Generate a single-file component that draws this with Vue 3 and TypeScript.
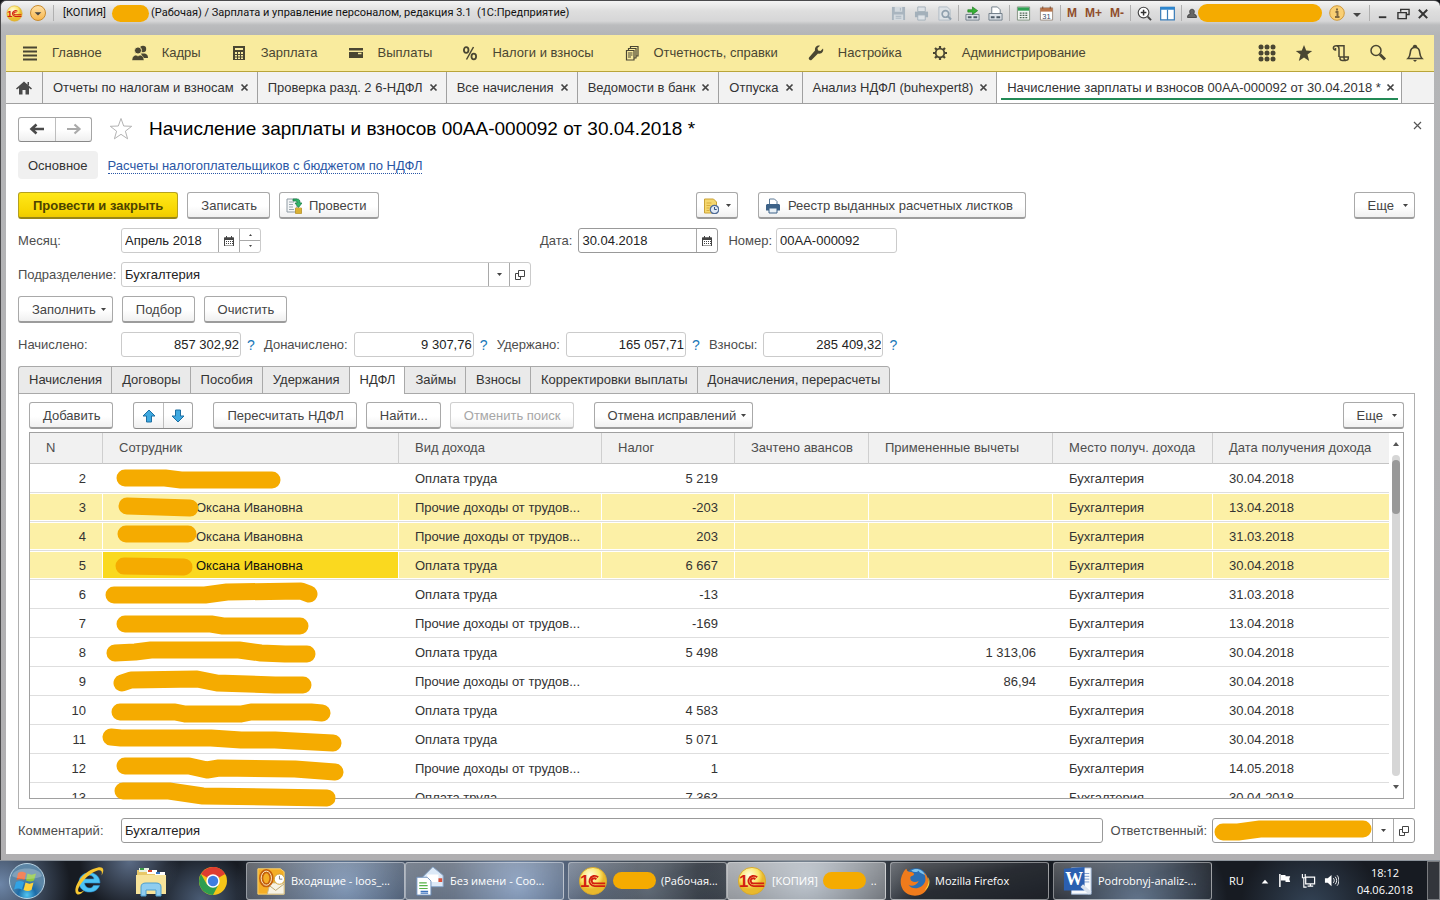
<script setup lang="ts">
import { ref } from 'vue'

interface Row {
  n: number
  name: string
  kind: string
  tax: string
  deduction: string
  date: string
  selected?: boolean
  current?: boolean
}

const icons: Record<string, string> = {
  menu: '<path d="M1 2.500h14M1 6.500h14M1 10.500h14M1 14.500h14" stroke="#4a4632" stroke-width="2"/>',
  people: '<g fill="#4a4632"><circle cx="11" cy="4" r="3.200"/><path d="M9 8.500h4c2 .8 3 2 3 4.500H11z"/><circle cx="6" cy="5.500" r="3.600" stroke="#f9eb9e"/><path d="M0 15.500c0-4 2-5 4-5.500l2 1 2-1c2 .5 4 1.500 4 5.500z" stroke="#f9eb9e" stroke-width=".6"/></g>',
  calc: '<rect x="2" y="1" width="12" height="14" fill="#4a4632"/><path d="M4 3h8v2H4z" fill="#f9eb9e"/><path d="M4 7h2v2H4zM7 7h2v2H7zM10 7h2v2h-2zM4 10h2v1.500H4zM7 10h2v1.500H7zM10 10h2v1.500h-2zM4 12.500h2V14H4zM7 12.500h2V14H7zM10 12.500h2V14h-2z" fill="#f9eb9e"/>',
  card: '<path d="M1 3h14v2.500H1zM1 7h14v6H1z" fill="#4a4632"/><path d="M10 8.500h3.500" stroke="#f9eb9e" stroke-width="1.500"/>',
  percent: '<g fill="none" stroke="#4a4632" stroke-width="1.800"><ellipse cx="4.200" cy="5" rx="2.300" ry="2.800"/><ellipse cx="11.800" cy="11.500" rx="2.300" ry="2.800"/><path d="M11.500 2l-7 12.500" stroke-width="1.500"/></g>',
  docs: '<g fill="none" stroke="#4a4632" stroke-width="1.200"><path d="M2.500 5.500h7.500v9.500H2.500zM4.500 5V3.500H12V13h-1.500M6.500 3V1.500H14V11h-1.500M4 8h4.500M4 10h4.500M4 12h3"/></g>',
  wrench: '<path d="M15 3.500l-2.500 2.500-2.500-.5-.5-2.500L12 .8C9.500 0 6.500 2 7 5.500L1 12.500c-1 1.500 1 3.500 2.500 2.500l6.500-6.500c3.500 1 6-2 5-5z" fill="#4a4632"/>',
  gear: '<g fill="none" stroke="#4a4632"><circle cx="8" cy="8" r="4.300" stroke-width="1.800"/><path d="M8 1v2.500M8 12.500V15M1 8h2.500M12.500 8H15M3 3l1.800 1.800M11.200 11.200L13 13M13 3l-1.800 1.800M4.800 11.200L3 13" stroke-width="2.200"/></g>',
  grid: '<g fill="#4a4632"><circle cx="3" cy="3" r="2.500"/><circle cx="9" cy="3" r="2.500"/><circle cx="15" cy="3" r="2.500"/><circle cx="3" cy="9" r="2.500"/><circle cx="9" cy="9" r="2.500"/><circle cx="15" cy="9" r="2.500"/><circle cx="3" cy="15" r="2.500"/><circle cx="9" cy="15" r="2.500"/><circle cx="15" cy="15" r="2.500"/></g>',
  starFill: '<path d="M9 1l2.200 5.600 6 .3-4.700 3.700L14.200 17 9 13.400 3.800 17l1.700-6.400L.8 6.900l6-.3z" fill="#4a4632"/>',
  scroll: '<path d="M4.500 1.700h7.500V14c0 3 4.300 3 4.300 0v-1H8v1.500c0 1.500 1 2 2.500 2h3.500M7 13V4.500M4.500 1.700C.5 1.700.5 6 3.500 6V4M4.500 1.700C6.500 1.700 7 3 7 5" fill="none" stroke="#4a4632" stroke-width="1.500"/>',
  search: '<circle cx="7" cy="6.500" r="5" fill="none" stroke="#4a4632" stroke-width="1.500"/><path d="M11 10.500l5 5" stroke="#4a4632" stroke-width="3"/>',
  bell: '<path d="M2 14.500h14c-2-2-2-3-2.300-6C13.500 5 12 3.500 9 3.500S4.500 5 4.300 8.500C4 11.500 4 12.500 2 14.500zM7.500 3.500c0-2.500 3-2.500 3 0" fill="none" stroke="#4a4632" stroke-width="1.600"/><path d="M7 16h4l-2 2z" fill="#4a4632"/>',
  save: '<path d="M1 1h14v14H1z" fill="#a9b5bf"/><path d="M4 1h8v5H4zM3 9h10v6H3z" fill="#d4dadf"/><path d="M5 11h6M5 13h6M10 2v3" stroke="#a9b5bf"/>',
  printGrey: '<path d="M4 1h8v5H4z" fill="#dde2e6" stroke="#a3b0ba"/><path d="M1 6h14v6H1z" fill="#a3b0ba"/><path d="M4 9.500h8V15H4z" fill="#dde2e6" stroke="#a3b0ba"/>',
  preview: '<path d="M2 1h9l3 3v11H2z" fill="#dde2e6" stroke="#b0bbc4"/><circle cx="9" cy="8.500" r="3.500" fill="none" stroke="#8fa0ae" stroke-width="1.800"/><path d="M11.500 11l3.500 3.500" stroke="#8fa0ae" stroke-width="2.200"/>',
  sendLink: '<path d="M1 9h14v6H1z" fill="#dde2e8" stroke="#6f7c88"/><path d="M3 12h4M9 12h4" stroke="#4f5c68" stroke-width="2"/><path d="M3 4H8V1l5.500 4L8 9V6.500H3z" fill="#35b233" stroke="#1f7a20" stroke-width=".7"/>',
  printLink: '<path d="M4 1h6l3 3v5H4z" fill="#fff" stroke="#6f7c88"/><path d="M1 8h14v7H1z" fill="#dde2e8" stroke="#6f7c88"/><path d="M3 12h4M9 12h4" stroke="#4f5c68" stroke-width="2"/>',
  calcGreen: '<path d="M1.500 1h13v14h-13z" fill="#f2f5f2" stroke="#80917f"/><path d="M2 1.500h12V5H2z" fill="#2fa152"/><path d="M4 7.500h9M4 10h9M4 12.500h9" stroke="#4d6656" stroke-width="1.300" stroke-dasharray="2 1"/>',
  calendar31: '<path d="M1.500 2h13v13h-13z" fill="#fff" stroke="#9a8c80"/><path d="M1.500 2h13v4h-13z" fill="#b9744a"/><path d="M4 .5V3M12 .5V3" stroke="#7a4a2c"/><text x="8" y="13.500" font-size="8" font-family="Liberation Sans, sans-serif" fill="#334a66" text-anchor="middle">31</text>',
  zoomIn: '<circle cx="7" cy="7" r="5.700" fill="#fff" stroke="#444" stroke-width="1.200"/><path d="M4 7h6M7 4v6" stroke="#333" stroke-width="1.600"/><path d="M11.500 11.500L15 15" stroke="#444" stroke-width="2"/>',
  panes: '<path d="M.7 1.500h14.600v13.200H.7z" fill="#fff" stroke="#3a7db8" stroke-width="1.300"/><path d="M.7 1h14.600v3H.7z" fill="#2d86cf"/><path d="M8 4v11" stroke="#3a7db8" stroke-width="1.300"/>',
  user: '<path d="M2 14c0-3 1-4 4-5-1.500-1-2-6 2-6s3.500 5 2 6c3 1 4 2 4 5z" fill="#666" stroke="#333"/>',
  info: '<circle cx="8" cy="8" r="7.300" fill="#f9cf74" stroke="#d09a3b"/><path d="M8 3.500v2M6.500 7H8.500v5M6 12h4.500" stroke="#806840" stroke-width="2" fill="none"/>',
  drop: '<path d="M1 5h8L5 9z" fill="#444"/>',
  min: '<path d="M2 11h8" stroke="#333" stroke-width="2"/>',
  restore: '<path d="M4 5V2.500h9V8h-2.500M1 6h9v6.500H1z" fill="none" stroke="#333" stroke-width="1.500"/>',
  closeBig: '<path d="M2 3l9 9M11 3l-9 9" stroke="#333" stroke-width="2.200"/>',
  cross: '<path d="M1.500 1.500l6 6M7.500 1.500l-6 6" stroke="#444" stroke-width="1.700"/>',
  crossThin: '<path d="M1 1l7 7M8 1L1 8" stroke="#555" stroke-width="1.200"/>',
  home: '<path d="M0 8l8-7 8 7-1 1-2-1.500V14H9.500V9.500h-3V14H3V7.500L1 9zM11.500 1.500H13V5l-1.500-1z" fill="#4a4a4a"/>',
  left: '<path d="M15 7H4M7.500 2.500L2.500 7l5 4.500" fill="none" stroke="#4a4a4a" stroke-width="2.600"/>',
  right: '<path d="M1 7h11M8.500 2.500l5 4.500-5 4.500" fill="none" stroke="#aaa" stroke-width="2.200"/>',
  starLine: '<path d="M12 1.500l2.700 7.500 8 .3-6.300 4.900 2.200 7.600L12 17.300 5.400 21.800l2.200-7.600L1.300 9.300l8-.3z" fill="#fff" stroke="#b3b3b3"/>',
  post: '<path d="M1 1h10v13H1z" fill="#f4f6f7" stroke="#8e9aa3"/><path d="M3 4h5M3 6.500h4M3 9h4M3 11.500h5" stroke="#9aa6ae"/><path d="M7 1h4c2.500 0 3 1.500 3 4h2l-3.500 4.500L9 5h2.200c0-1.500-.5-2-2-2H7z" fill="#31b56a" stroke="#14793f" stroke-width=".7"/><path d="M9.500 10h6v5.500h-6z" fill="#f0c63f" stroke="#b08a1c" stroke-width=".7"/><path d="M9.500 12h6M9.500 14h6" stroke="#b08a1c" stroke-width=".7"/>',
  docClock: '<path d="M1.500 1h9l3 3v11h-12z" fill="#f5d76f" stroke="#caa338"/><path d="M3.500 5h5M3.500 7.500h4M3.500 10h3M3.500 12.500h3" stroke="#d9ae3c"/><circle cx="11.500" cy="11.500" r="4.200" fill="#dfe9f6" stroke="#4f6b96" stroke-width="1.200"/><path d="M11.500 9v2.500h2.200" stroke="#35517d" fill="none"/>',
  printer: '<path d="M4.500 1h5L12 3.500V7H4.500z" fill="#fff" stroke="#5d7a96"/><path d="M2 6h12l1 1v5.500H1V7z" fill="#3d6288"/><path d="M4 10h8v5H4z" fill="#e9f0f6" stroke="#3d6288"/>',
  caret: '<path d="M0 1h5L2.500 4z" fill="#444"/>',
  caretUp: '<path d="M1 4h3L2.500 2z" fill="#444"/>',
  caretDown: '<path d="M1 1h3L2.500 3z" fill="#444"/>',
  cal: '<path d="M.5 2h9v8h-9z" fill="#fff" stroke="#444"/><path d="M0 1.500h10V4H0z" fill="#444"/><path d="M2.500 0v2M7.500 0v2" stroke="#444"/><path d="M2 5.500h7M2 7.500h7" stroke="#444" stroke-dasharray="1 1"/>',
  open: '<path d="M3.500.5h6v6h-6zM3 3.500H.5v6h5V7" fill="none" stroke="#444"/>',
  up: '<path d="M7 1l6 6H9.500v6h-5V7H1z" fill="#3fa9e0" stroke="#1c6fa3"/>',
  down: '<path d="M7 13L1 7h3.500V1h5v6H13z" fill="#3fa9e0" stroke="#1c6fa3"/>',
  scrollUp: '<path d="M0 5h6L3 1z" fill="#555"/>',
  scrollDown: '<path d="M0 1h6L3 5z" fill="#555"/>',
  onec: '<defs><radialGradient id="onecFill" cx=".4" cy=".3"><stop offset="0" stop-color="#fffde0"/><stop offset=".7" stop-color="#fbe56a"/><stop offset="1" stop-color="#e9b92d"/></radialGradient></defs><circle cx="16" cy="16" r="14.500" fill="url(#onecFill)" stroke="#d8a92c"/><text x="2" y="22" font-size="18" font-weight="700" font-family="Liberation Sans, sans-serif" fill="#d3200f">1</text><path d="M21.500 12a5.500 5.500 0 1 0-3.500 9.500H29M19.500 14.200a2.700 2.700 0 1 0-1.500 4.300H29" fill="none" stroke="#d3200f" stroke-width="2"/>',
  start: '<defs><radialGradient id="orb" cx=".5" cy=".9"><stop offset="0" stop-color="#53c7f2"/><stop offset=".5" stop-color="#1d6ca8"/><stop offset="1" stop-color="#5c86a6"/></radialGradient></defs><circle cx="19" cy="19" r="17.500" fill="url(#orb)" stroke="#b9d3e3"/><path d="M10 11c3-2 5-1.500 8 0l-1.500 7c-3-1.500-5-1.500-8 0z" fill="#f0622d"/><path d="M19.500 11.500c3 1.500 5 1.500 8.500 0l-2 7c-3 1.500-5 1-8 0z" fill="#8dc63f"/><path d="M8 20c3-1.500 5-1.500 8 0l-2 7.500c-3-1.500-5-1.500-8 0z" fill="#31a3e4"/><path d="M17.500 20.500c3 1.500 5 1.500 8 0l-2 7.500c-3 1.500-5 1-8 0z" fill="#ffd23c"/><path d="M4 14C6 4 32 4 34 14 28 18 10 18 4 14z" fill="#fff" opacity=".22"/>',
  ie: '<path d="M27 18H11.500c.5 6 7.500 6.500 9 2.500H26.500C23.500 30 6 29.500 6 17 6 5 27 4 27 18zM11.500 14h9.500c-.5-5-8.500-5-9.500 0z" fill="#4cc3f5" stroke="#2b8fd0" stroke-width=".6"/><path d="M4.500 29.500C-2 27 7 6 25 2.500c6-1 6.500 3 3.500 8 1-4 0-6-4-5C13 9 1 26 6.500 27c1.500.2 3-.5 5-1.500-2.500 2.500-5 4.500-7 4z" fill="#f7c631"/>',
  folder: '<path d="M2 5h12l2 3h14v21H2z" fill="#e8c868"/><path d="M4 3h10v4H4z" fill="#e9f3e0"/><path d="M5 3h4v2H5z" fill="#3b9c46"/><path d="M12 5h10v4H12z" fill="#fff"/><path d="M13 5h4v2h-4z" fill="#d5472f"/><path d="M20 7h10v4H20z" fill="#fff"/><path d="M21 7h4v2h-4z" fill="#3a78c4"/><path d="M1 10h30v19H1z" fill="#f7e39a"/><path d="M6 31v-9c0-3 2-4 5-4h10c3 0 5 1 5 4v9h-5v-6H11v6z" fill="#8fcdf0" stroke="#4d9fd0"/>',
  chrome: '<circle cx="16" cy="16" r="14" fill="#f5c518"/><path d="M16 16L3.900 9A14 14 0 0 1 28.100 9z" fill="#df3d30"/><path d="M16 2a14 14 0 0 1 12.100 7H16z" fill="#df3d30"/><path d="M3.900 9A14 14 0 0 0 16 30l5.500-10.500L10 19.500z" fill="#2f9e4f"/><circle cx="16" cy="16" r="6.700" fill="#fff"/><circle cx="16" cy="16" r="5.200" fill="#3f7de0"/>',
  outlook: '<path d="M2 3h24l4 3v24H2z" fill="#f4ae26" stroke="#ffd873"/><path d="M15 18h15v12H12z" fill="#f7f3e4" stroke="#c9b98a"/><path d="M13 20l8 6 9-7" fill="none" stroke="#b9a46b"/><ellipse cx="11" cy="13" rx="5.500" ry="7.500" fill="none" stroke="#c4600c" stroke-width="4.500"/><ellipse cx="11" cy="13" rx="5.500" ry="7.500" fill="none" stroke="#fff3d2" stroke-width="1"/><circle cx="25" cy="14" r="5.500" fill="#fff" stroke="#d0a030"/><path d="M25 10.500V14h3" fill="none" stroke="#777"/>',
  mail: '<path d="M8 12L19 1l11 9v12H8z" fill="#dce9f7" stroke="#8aa8cb"/><path d="M13 9h12v8H13z" fill="#fff"/><path d="M25 13h4v4h-4z" fill="#d9503a"/><path d="M2 12h11l4 4v15H2z" fill="#fff" stroke="#6d8fbd"/><path d="M4.500 18h8M4.500 21h9M4.500 24h9" stroke="#57b347" stroke-width="1.300"/><path d="M6 27h8M6 29h8" stroke="#3c71bd" stroke-width="1.300"/>',
  firefox: '<circle cx="17" cy="15" r="12.500" fill="#2a6fb5"/><path d="M12 5c5-4 13-1 15 5-4-3-6-2-7-5-2 2-5 2-8 0z" fill="#7fc4ee"/><path d="M3 8c1-2 2-4 4-5 0 2 1 3 3 3 3 0 5 1 5 3-1 2-4 1-4 4 0 4 5 5 9 3-2 5-8 6-11 4 4 6 15 5 18-4 .5-4-.5-7-2-9 5 3 7 11 4 17-5 10-20 10-26 1-3-5-3-11 0-17z" fill="#f07b1c"/><path d="M30 12c1 5 0 10-4 14 5-2 7-10 4-14z" fill="#fbd33c"/>',
  word: '<path d="M9 2h21v28H9z" fill="#f8fafd" stroke="#9fb4d4"/><path d="M22 8h6M22 11h6M22 14h6M22 17h6" stroke="#7c9bcc"/><path d="M1 3l22-2v25H1z" fill="#2b5fb0"/><text x="12" y="20" font-size="19" font-weight="700" font-family="Liberation Serif, serif" fill="#fff" text-anchor="middle">W</text><path d="M20 21l9 8" stroke="#d9e2ee" stroke-width="4"/>',
  flag: '<path d="M2 1v14" stroke="#fff" stroke-width="1.600"/><path d="M3 2h5v1.500h5l-1 3 1 3H8V8H3z" fill="#fff"/>',
  network: '<path d="M5 4.500h9.500v7H5zM7 14h6M10 12v2" fill="none" stroke="#fff" stroke-width="1.300"/><path d="M1.500 1v4h3V1M3 5v10h3" fill="none" stroke="#fff" stroke-width="1.200"/>',
  sound: '<path d="M1 5.500h3L8 2v12l-4-3.500H1z" fill="#fff"/><path d="M10 5.500c1.200 1.500 1.200 3.500 0 5M12 4c2 2.500 2 5.500 0 8M14 2.500c2.500 3 2.500 8 0 11" fill="none" stroke="#fff"/>',
  trayUp: '<path d="M1 9h8L5 4.500z" fill="#fff"/>',
}

const nav = [
  { icon: 'menu', text: 'Главное' },
  { icon: 'people', text: 'Кадры' },
  { icon: 'calc', text: 'Зарплата' },
  { icon: 'card', text: 'Выплаты' },
  { icon: 'percent', text: 'Налоги и взносы' },
  { icon: 'docs', text: 'Отчетность, справки' },
  { icon: 'wrench', text: 'Настройка' },
  { icon: 'gear', text: 'Администрирование' },
]
const navTools = [
  { icon: 'grid', label: 'Меню функций' },
  { icon: 'starFill', label: 'Избранное' },
  { icon: 'scroll', label: 'История' },
  { icon: 'search', label: 'Поиск' },
  { icon: 'bell', label: 'Оповещения' },
]
const openTabs = [
  'Отчеты по налогам и взносам',
  'Проверка разд. 2 6-НДФЛ',
  'Все начисления',
  'Ведомости в банк',
  'Отпуска',
  'Анализ НДФЛ (buhexpert8)',
  'Начисление зарплаты и взносов 00АА-000092 от 30.04.2018 *',
]
const activeWindow = ref(6)

const sections = ['Начисления', 'Договоры', 'Пособия', 'Удержания', 'НДФЛ', 'Займы', 'Взносы', 'Корректировки выплаты', 'Доначисления, перерасчеты']
const activeSection = ref('НДФЛ')

const totals = ref([
  { id: 'accrued', label: 'Начислено:', value: '857 302,92' },
  { id: 'extra', label: 'Доначислено:', value: '9 307,76' },
  { id: 'held', label: 'Удержано:', value: '165 057,71' },
  { id: 'fees', label: 'Взносы:', value: '285 409,32' },
])

const month = ref('Апрель 2018')
const docDate = ref('30.04.2018')
const docNumber = ref('00АА-000092')
const department = ref('Бухгалтерия')
const comment = ref('Бухгалтерия')

const pay = 'Оплата труда'
const other = 'Прочие доходы от трудов...'
const rows: Row[] = [
  { n: 2, name: '', kind: pay, tax: '5 219', deduction: '', date: '30.04.2018' },
  { n: 3, name: 'Оксана Ивановна', kind: other, tax: '-203', deduction: '', date: '13.04.2018', selected: true },
  { n: 4, name: 'Оксана Ивановна', kind: other, tax: '203', deduction: '', date: '31.03.2018', selected: true },
  { n: 5, name: 'Оксана Ивановна', kind: pay, tax: '6 667', deduction: '', date: '30.04.2018', selected: true, current: true },
  { n: 6, name: '', kind: pay, tax: '-13', deduction: '', date: '31.03.2018' },
  { n: 7, name: '', kind: other, tax: '-169', deduction: '', date: '13.04.2018' },
  { n: 8, name: '', kind: pay, tax: '5 498', deduction: '1 313,06', date: '30.04.2018' },
  { n: 9, name: '', kind: other, tax: '', deduction: '86,94', date: '30.04.2018' },
  { n: 10, name: '', kind: pay, tax: '4 583', deduction: '', date: '30.04.2018' },
  { n: 11, name: '', kind: pay, tax: '5 071', deduction: '', date: '30.04.2018' },
  { n: 12, name: '', kind: other, tax: '1', deduction: '', date: '14.05.2018' },
  { n: 13, name: '', kind: pay, tax: '7 363', deduction: '', date: '30.04.2018' },
]

// Marker strokes that hide the surnames, in the coordinates of the table frame.
const marks = [
  '96,46 136,46 152,48 243,48',
  '98,74 161,76',
  '97,102 159,102',
  '95,134 155,135',
  '85,163 176,163 198,160 272,159 280,162',
  '96,192 182,192 194,194 271,194',
  '86,221 106,220 122,218 210,218 232,221 256,222 278,222',
  '93,251 102,248 168,247 188,251 246,253 274,253',
  '91,280 146,280 156,282 212,282 222,280 282,280 293,281',
  '82,305 92,306 182,306 212,308 246,308 304,311',
  '96,334 160,334 178,338 190,336 266,337 306,340',
  '94,359 140,359 174,364 240,365 298,366',
]

const tasks = [
  { icon: 'outlook', text: 'Входящие - loos_...', cls: 'lit joined' },
  { icon: 'mail', text: 'Без имени - Соо...', cls: 'lit' },
  { icon: 'onec', text: '(Рабочая...', cls: 'joined', before: true },
  { icon: 'onec', text: '[КОПИЯ]', cls: 'active', after: true },
  { icon: 'firefox', text: 'Mozilla Firefox', cls: '' },
  { icon: 'word', text: 'Podrobnyj-analiz-...', cls: '' },
]
</script>

<template>
  <div class="desktop">
    <div class="window">
      <header class="titlebar">
        <svg class="i17" viewBox="0 0 32 32" v-html="icons.onec" />
        <button class="sys-drop" aria-label="Главное меню"><svg class="i10" viewBox="0 0 10 12" v-html="icons.drop" /></button>
        <span class="tsep" />
        <div class="caption">[КОПИЯ]<i class="blot blot-s" />(Рабочая) / Зарплата и управление персоналом, редакция 3.1&nbsp; (1С:Предприятие)</div>
        <div class="ttools">
          <button aria-label="Сохранить"><svg class="i15" viewBox="0 0 16 16" v-html="icons.save" /></button>
          <button aria-label="Печать"><svg class="i15" viewBox="0 0 16 16" v-html="icons.printGrey" /></button>
          <button aria-label="Просмотр"><svg class="i15" viewBox="0 0 16 16" v-html="icons.preview" /></button>
          <span class="tsep" />
          <button aria-label="Получить ссылку"><svg class="i15" viewBox="0 0 16 16" v-html="icons.sendLink" /></button>
          <button aria-label="Перейти по ссылке"><svg class="i15" viewBox="0 0 16 16" v-html="icons.printLink" /></button>
          <span class="tsep" />
          <button aria-label="Калькулятор"><svg class="i15" viewBox="0 0 16 16" v-html="icons.calcGreen" /></button>
          <button aria-label="Календарь"><svg class="i15" viewBox="0 0 16 16" v-html="icons.calendar31" /></button>
          <span class="tsep" />
          <button class="mem">M</button>
          <button class="mem">M+</button>
          <button class="mem">M-</button>
          <span class="tsep" />
          <button aria-label="Масштаб"><svg class="i15" viewBox="0 0 16 16" v-html="icons.zoomIn" /></button>
          <button aria-label="Панели"><svg class="i15" viewBox="0 0 16 16" v-html="icons.panes" /></button>
          <span class="tsep" />
        </div>
        <div class="tuser">
          <svg class="i12" viewBox="0 0 16 16" v-html="icons.user" />
          <i class="blot blot-l" />
        </div>
        <div class="tend">
          <button aria-label="Справка"><svg class="i16" viewBox="0 0 16 16" v-html="icons.info" /></button>
          <button aria-label="Еще"><svg class="i10" viewBox="0 0 10 10" v-html="icons.drop" /></button>
          <span class="tsep" />
          <button aria-label="Свернуть"><svg class="i13" viewBox="0 0 14 14" v-html="icons.min" /></button>
          <button aria-label="Восстановить"><svg class="i13" viewBox="0 0 14 14" v-html="icons.restore" /></button>
          <button aria-label="Закрыть окно"><svg class="i13" viewBox="0 0 14 14" v-html="icons.closeBig" /></button>
        </div>
      </header>

      <div class="client">
        <nav class="nav">
          <a v-for="item in nav" :key="item.text" class="nav-item" href="#">
            <svg class="i16" viewBox="0 0 16 16" v-html="icons[item.icon]" />
            <span>{{ item.text }}</span>
          </a>
          <div class="nav-tools">
            <button v-for="t in navTools" :key="t.icon" :aria-label="t.label"><svg class="i18" viewBox="0 0 18 18" v-html="icons[t.icon]" /></button>
          </div>
        </nav>

        <div class="wtabs">
          <button class="home" aria-label="Начальная страница"><svg class="i16" viewBox="0 0 16 15" v-html="icons.home" /></button>
          <div v-for="(t, i) in openTabs" :key="t" class="wtab" :class="{ on: i === activeWindow }">
            <button class="wtab-name" @click="activeWindow = i">{{ t }}</button>
            <button class="wtab-x" aria-label="Закрыть"><svg class="i9" viewBox="0 0 9 9" v-html="icons.cross" /></button>
          </div>
        </div>

        <main class="form">
          <div class="head">
            <div class="pair">
              <button aria-label="Назад"><svg class="i16" viewBox="0 0 16 14" v-html="icons.left" /></button>
              <button aria-label="Вперед"><svg class="i16" viewBox="0 0 16 14" v-html="icons.right" /></button>
            </div>
            <button class="plain" aria-label="В избранное"><svg class="i24" viewBox="0 0 24 24" v-html="icons.starLine" /></button>
            <h1>Начисление зарплаты и взносов 00АА-000092 от 30.04.2018 *</h1>
            <button class="plain close" aria-label="Закрыть"><svg class="i9" viewBox="0 0 9 9" v-html="icons.crossThin" /></button>
          </div>

          <div class="views">
            <a class="view on" href="#">Основное</a>
            <a class="link" href="#">Расчеты налогоплательщиков с бюджетом по НДФЛ</a>
          </div>

          <div class="bar cmd">
            <div class="bar cmd-left">
              <button class="btn primary">Провести и закрыть</button>
              <button class="btn">Записать</button>
              <button class="btn iconic"><svg class="i16" viewBox="0 0 16 16" v-html="icons.post" />Провести</button>
            </div>
            <button class="btn iconic wide-gap" aria-label="Создать на основании"><svg class="i16" viewBox="0 0 16 16" v-html="icons.docClock" /><svg class="i5" viewBox="0 0 5 5" v-html="icons.caret" /></button>
            <button class="btn iconic"><svg class="i16" viewBox="0 0 16 16" v-html="icons.printer" />Реестр выданных расчетных листков</button>
            <button class="btn more">Еще<svg class="i5" viewBox="0 0 5 5" v-html="icons.caret" /></button>
          </div>

          <div class="bar">
            <div class="bar month-part">
              <label class="cap" for="month">Месяц:</label>
              <div class="field f-month">
                <input id="month" v-model="month">
                <button aria-label="Выбрать месяц"><svg class="i10" viewBox="0 0 10 10" v-html="icons.cal" /></button>
                <div class="spin">
                  <button aria-label="Больше"><svg class="i5" viewBox="0 0 5 5" v-html="icons.caretUp" /></button>
                  <button aria-label="Меньше"><svg class="i5" viewBox="0 0 5 5" v-html="icons.caretDown" /></button>
                </div>
              </div>
            </div>
            <label for="date">Дата:</label>
            <div class="field dark f-date">
              <input id="date" v-model="docDate">
              <button aria-label="Выбрать дату"><svg class="i10" viewBox="0 0 10 10" v-html="icons.cal" /></button>
            </div>
            <label for="number">Номер:</label>
            <div class="field f-num"><input id="number" v-model="docNumber"></div>
          </div>

          <div class="bar">
            <label class="cap" for="dept">Подразделение:</label>
            <div class="field f-dept">
              <input id="dept" v-model="department">
              <button aria-label="Выбрать"><svg class="i5" viewBox="0 0 5 5" v-html="icons.caret" /></button>
              <button aria-label="Открыть"><svg class="i10" viewBox="0 0 10 10" v-html="icons.open" /></button>
            </div>
          </div>

          <div class="bar fill">
            <button class="btn drop">Заполнить<svg class="i5" viewBox="0 0 5 5" v-html="icons.caret" /></button>
            <button class="btn">Подбор</button>
            <button class="btn">Очистить</button>
          </div>

          <div class="totals">
            <div v-for="t in totals" :key="t.id" class="total">
              <label :for="t.id">{{ t.label }}</label>
              <div class="field f-sum"><input :id="t.id" v-model="t.value"></div>
              <button class="help" aria-label="Подсказка">?</button>
            </div>
          </div>

          <div class="stabs" role="tablist">
            <button v-for="s in sections" :key="s" role="tab" :class="{ on: s === activeSection }" @click="activeSection = s">{{ s }}</button>
          </div>

          <section class="panel">
            <div class="bar tools">
              <button class="btn">Добавить</button>
              <div class="pair arrows">
                <button aria-label="Вверх"><svg class="i14" viewBox="0 0 14 14" v-html="icons.up" /></button>
                <button aria-label="Вниз"><svg class="i14" viewBox="0 0 14 14" v-html="icons.down" /></button>
              </div>
              <button class="btn">Пересчитать НДФЛ</button>
              <button class="btn">Найти...</button>
              <button class="btn" disabled>Отменить поиск</button>
              <button class="btn drop fixes">Отмена исправлений<svg class="i5" viewBox="0 0 5 5" v-html="icons.caret" /></button>
              <button class="btn more">Еще<svg class="i5" viewBox="0 0 5 5" v-html="icons.caret" /></button>
            </div>

            <div class="frame">
              <div class="view-port">
                <table>
                  <colgroup>
                    <col class="c-n"><col><col class="c-kind"><col class="c-tax"><col class="c-adv"><col class="c-ded"><col class="c-place"><col class="c-date">
                  </colgroup>
                  <thead>
                    <tr>
                      <th>N</th><th>Сотрудник</th><th>Вид дохода</th><th>Налог</th><th>Зачтено авансов</th><th>Примененные вычеты</th><th>Место получ. дохода</th><th>Дата получения дохода</th>
                    </tr>
                  </thead>
                  <tbody>
                    <tr v-for="r in rows" :key="r.n" :class="{ sel: r.selected, cur: r.current }">
                      <td class="r">{{ r.n }}</td>
                      <td class="emp">{{ r.name }}</td>
                      <td>{{ r.kind }}</td>
                      <td class="r">{{ r.tax }}</td>
                      <td />
                      <td class="r">{{ r.deduction }}</td>
                      <td>Бухгалтерия</td>
                      <td>{{ r.date }}</td>
                    </tr>
                  </tbody>
                </table>
              </div>
              <div class="scroll">
                <svg class="i6" viewBox="0 0 6 6" v-html="icons.scrollUp" />
                <div class="track"><div class="thumb" /></div>
                <svg class="i6" viewBox="0 0 6 6" v-html="icons.scrollDown" />
              </div>
              <svg class="marks" width="360" height="390" viewBox="0 0 360 390">
                <polyline v-for="m in marks" :key="m" :points="m" />
              </svg>
            </div>
          </section>

          <div class="bar foot">
            <label class="cap" for="comment">Комментарий:</label>
            <div class="field dark f-comment"><input id="comment" v-model="comment"></div>
            <label class="resp-label" for="resp">Ответственный:</label>
            <div class="field dark f-resp">
              <input id="resp">
              <button aria-label="Выбрать"><svg class="i5" viewBox="0 0 5 5" v-html="icons.caret" /></button>
              <button aria-label="Открыть"><svg class="i10" viewBox="0 0 10 10" v-html="icons.open" /></button>
              <svg class="marks" width="162" height="25" viewBox="0 0 162 25"><polyline points="11,14 26,14 48,11 151,11" /></svg>
            </div>
          </div>
        </main>
      </div>
    </div>

    <footer class="taskbar">
      <div class="quick">
        <button aria-label="Пуск"><svg class="i38" viewBox="0 0 38 38" v-html="icons.start" /></button>
        <button aria-label="Internet Explorer"><svg class="i32" viewBox="0 0 32 32" v-html="icons.ie" /></button>
        <button aria-label="Проводник"><svg class="i32" viewBox="0 0 32 32" v-html="icons.folder" /></button>
        <button aria-label="Chrome"><svg class="i32" viewBox="0 0 32 32" v-html="icons.chrome" /></button>
      </div>
      <div class="tasks">
        <button v-for="t in tasks" :key="t.text" class="task" :class="t.cls">
          <svg class="i30" viewBox="0 0 32 32" v-html="icons[t.icon]" />
          <i v-if="t.before" class="blot blot-t" />
          <span>{{ t.text }}</span>
          <template v-if="t.after"><i class="blot blot-t" /><span>..</span></template>
        </button>
      </div>
      <div class="tray">
        <span class="lang">RU</span>
        <svg class="i10" viewBox="0 0 10 12" v-html="icons.trayUp" />
        <svg class="i15" viewBox="0 0 16 16" v-html="icons.flag" />
        <svg class="i15" viewBox="0 0 16 16" v-html="icons.network" />
        <svg class="i15" viewBox="0 0 16 16" v-html="icons.sound" />
        <div class="clock"><span>18:12</span><span>04.06.2018</span></div>
        <button class="peek" aria-label="Показать рабочий стол" />
      </div>
    </footer>
  </div>
</template>

<style>
html, body { margin: 0; background: #15171a; }
</style>

<style scoped>
* { box-sizing: border-box; }
.desktop { height: 100vh; display: flex; flex-direction: column; overflow: hidden; font: 13px/16px "Liberation Sans", Arial, sans-serif; color: #333; }
button { font: inherit; color: inherit; margin: 0; padding: 0; border: 0; background: none; display: flex; align-items: center; justify-content: center; white-space: nowrap; }
a { color: inherit; text-decoration: none; }
svg { display: block; flex: none; }
.i5 { width: 5px; height: 5px; }
.i6 { width: 6px; height: 6px; }
.i9 { width: 9px; height: 9px; }
.i10 { width: 10px; height: 10px; }
.i12 { width: 12px; height: 14px; }
.i13 { width: 13px; height: 13px; }
.i14 { width: 14px; height: 14px; }
.i15 { width: 15px; height: 15px; }
.i16 { width: 16px; height: 16px; }
.i17 { width: 17px; height: 17px; }
.i18 { width: 18px; height: 18px; }
.i24 { width: 24px; height: 24px; }
.i30 { width: 30px; height: 30px; }
.i32 { width: 32px; height: 32px; }
.i38 { width: 38px; height: 38px; }

.window { flex: 1; min-height: 0; display: flex; flex-direction: column; padding: 0 6px 6px 5px; border: 1px solid #4a4a4c; border-width: 1px 0 0 1px; border-radius: 6px 6px 0 0; background: linear-gradient(#f4f4f4, #dedede 10px, #d6d6d7 20px, #bbbcbe 24px, #b4b5b7 34px, #b0afb1); }
.titlebar { height: 34px; padding: 0 4px 10px 0; display: flex; align-items: center; font: 11px/14px Roboto, "Open Sans", sans-serif; color: #111; }
.sys-drop { width: 16px; height: 16px; margin: 0 7px; border: 1px solid #c98a2c; border-radius: 50%; background: linear-gradient(#ffe0a3, #f7b64d); }
.tsep { width: 1px; height: 16px; background: #b0b0b0; }
.caption { flex: 1; min-width: 0; margin-left: 9px; display: flex; align-items: center; white-space: nowrap; overflow: hidden; }
.blot { flex: none; border-radius: 9px; background: #f5ab00; }
.blot-s { width: 37px; height: 17px; margin: 0 2px 0 6px; }
.blot-l { width: 124px; height: 18px; }
.blot-t { width: 43px; height: 17px; }
.ttools, .tend, .tuser { display: flex; align-items: center; }
.ttools { gap: 8px; margin-right: 6px; }
.ttools .tsep { margin: 0 -2px; }
.mem { font: bold 12px/14px "Liberation Sans", Arial, sans-serif; color: #8f4d2b; }
.tend { gap: 7px; margin-left: 7px; }

.client { flex: 1; min-height: 0; display: flex; flex-direction: column; background: #fff; }
.nav { height: 37px; padding: 0 10px 0 16px; display: flex; align-items: center; gap: 30px; background: #f9eb9e; border-bottom: 1px solid #b9a53a; color: #4a4632; }
.nav-item { display: flex; align-items: center; gap: 14px; white-space: nowrap; }
.nav-tools { margin-left: auto; display: flex; gap: 19px; }
.wtabs { height: 32px; display: flex; background: #f2f2f2; border-bottom: 1px solid #a0a0a0; }
.home { width: 37px; border-right: 1px solid #a0a0a0; }
.wtab { display: flex; align-items: center; padding: 0 8px 0 10px; gap: 6px; border-right: 1px solid #a0a0a0; }
.wtab-x { width: 9px; height: 12px; }
.wtab.on { position: relative; padding-right: 6px; gap: 5px; background: #fff; }
.wtab.on::after { content: ""; position: absolute; left: 4px; right: 3px; bottom: 3px; height: 2px; background: #238a56; }

.form { flex: 1; min-height: 0; padding: 12px 19px 11px 12px; display: flex; flex-direction: column; color: #4d4d4d; }
.head { height: 26px; display: flex; align-items: center; }
h1 { margin: 0 0 0 16px; font: 19px/24px "Liberation Sans", Arial, sans-serif; color: #000; white-space: nowrap; }
.pair { display: flex; height: 25px; border: 1px solid #a5a5a5; border-bottom-color: #888; border-radius: 3px; background: linear-gradient(#fff 50%, #efefef); }
.pair button { width: 36px; }
.pair button + button { border-left: 1px solid #bdbdbd; }
.head .plain { margin-left: 17px; }
.head .close { margin: 0 -7px 8px auto; }
.views { margin-top: 9px; display: flex; align-items: center; gap: 10px; }
.view { padding: 7px 10px 5px; border-radius: 4px; background: #f0f0f0; color: #333; }
.link { color: #2a56a5; border-bottom: 1px dotted #2a56a5; line-height: 15px; padding-top: 1px; }
.bar { display: flex; align-items: center; }
.cmd { margin: 13px 0 9px; }
.cmd-left { width: 678px; gap: 9px; margin: 0; }
.btn { height: 27px; padding: 1px 12px 0 13px; border: 1px solid #a9a9a9; border-bottom: 2px solid #9c9c9c; border-radius: 3px; background: linear-gradient(#fff 55%, #f0f0f0); color: #444; }
.btn.primary { padding: 1px 14px 0; font-weight: bold; color: #4d4300; background: linear-gradient(#ffe81a, #f6d400 80%, #eeca00); border-color: #b5a11e; border-bottom-color: #988616; }
.btn.iconic { gap: 7px; padding-left: 6px; }
.btn.wide-gap { padding-right: 6px; margin-right: 20px; }
.btn.drop, .btn.more { gap: 5px; padding-right: 6px; }
.btn.more { gap: 9px; margin-left: auto; }
.btn:disabled { color: #a6a6a6; border-color: #cfcfcf; border-bottom-color: #c0c0c0; }
.month-part { width: 522px; }
.cap { width: 103px; white-space: nowrap; }
.field { position: relative; height: 25px; display: flex; border: 1px solid #cbcbcb; border-radius: 3px; background: #fff; }
.field.dark { border-color: #999; }
.field input { flex: 1; min-width: 0; padding: 0 3px; border: 0; outline: 0; background: none; font: inherit; color: #222; }
.field > button { width: 21px; border-left: 1px solid #a9a9a9; }
.spin { width: 21px; border-left: 1px solid #a9a9a9; display: flex; flex-direction: column; }
.spin button { flex: 1; }
.spin button + button { border-top: 1px solid #a9a9a9; }
.f-month { width: 140px; }
.f-date { width: 140px; margin: 0 10px 0 6px; }
.f-num { width: 121px; margin-left: 4px; }
.f-dept { width: 410px; }
.form > .bar + .bar { margin-top: 9px; }
.form > .cmd + .bar { margin-top: 0; }
.fill { gap: 9px; }
.totals { margin: 9px 0; display: flex; align-items: center; gap: 9px; }
.total { display: flex; align-items: center; gap: 6px; }
.total:first-child label { width: 97px; }
.f-sum { width: 120px; }
.f-sum input { text-align: right; padding: 0 1px; }
.help { color: #1a78b8; width: 8px; font-size: 14px; }
.stabs { display: flex; margin-bottom: -1px; position: relative; }
.stabs button { height: 28px; padding: 0 9px 0 10px; border: 1px solid #a9a9a9; border-right-width: 0; background: #eaeaea; color: #333; }
.stabs button:first-child { border-top-left-radius: 3px; }
.stabs button:last-child { border-right-width: 1px; border-top-right-radius: 3px; }
.stabs button.on { background: #fff; border-bottom-color: #fff; }
.panel { flex: 1; min-height: 0; display: flex; flex-direction: column; padding: 8px 10px 9px; border: 1px solid #b0b0b0; }
.tools { gap: 9px; margin-bottom: 3px; }
.arrows { height: 27px; margin: 0 11px; }
.arrows button { width: 29px; }
.fixes { margin-left: 11px; }
.frame { flex: 1; min-height: 0; position: relative; display: flex; border: 1px solid #a0a0a0; }
.view-port { flex: 1; min-width: 0; overflow: hidden; }
table { width: 100%; table-layout: fixed; border-collapse: separate; border-spacing: 0; }
.c-n { width: 73px; }
.c-kind { width: 203px; }
.c-tax { width: 133px; }
.c-adv { width: 134px; }
.c-ded { width: 184px; }
.c-place { width: 160px; }
.c-date { width: 176px; }
th { height: 31px; padding: 0 16px; text-align: left; font-weight: normal; white-space: nowrap; background: #f1f1f1; border-right: 1px solid #cfcfcf; border-bottom: 1px solid #c4c4c4; color: #4d4d4d; }
th:last-child { border-right: 0; }
td { height: 29px; padding: 2px 16px 0; white-space: nowrap; border-bottom: 1px solid #dedede; color: #333; }
.r { text-align: right; padding-right: 17px; }
.emp { padding-left: 93px; }
.sel td { background: #fcf0a6; box-shadow: inset 0 1px #fff, inset 0 -1px #fff, inset -1px 0 #fff; }
.sel td:last-child { box-shadow: inset 0 1px #fff, inset 0 -1px #fff; }
.cur .emp { background: #fad91f; color: #111; }
.scroll { width: 14px; padding: 8px 0; display: flex; flex-direction: column; align-items: center; gap: 8px; }
.track { flex: 1; width: 8px; padding-top: 5px; border-radius: 4px; background: #d6d6d6; }
.thumb { height: 54px; border-radius: 4px; background: #999; }
.marks { position: absolute; left: -1px; top: -1px; overflow: visible; pointer-events: none; fill: none; stroke: #f5ab00; stroke-width: 17px; stroke-linecap: round; stroke-linejoin: round; }
.foot { margin-top: 9px; }
.f-comment { flex: 1; }
.resp-label { margin: 0 5px 0 8px; }
.f-resp { width: 203px; }

.taskbar { height: 40px; display: flex; align-items: center; border-top: 1px solid #8d949c; color: #fff; font: 11px/14px "Open Sans", "Noto Sans", sans-serif; background: radial-gradient(circle at 0 60%, #6d86a8, transparent 70px), radial-gradient(circle at 9% 0, #5a6b85, transparent 50px), radial-gradient(circle at 14% 100%, #4b5d76, transparent 50px), radial-gradient(circle at 24% 60%, #6d86a8, transparent 110px), radial-gradient(circle at 36% 60%, #7f96b8, transparent 120px), radial-gradient(circle at 45% 70%, #55606d, transparent 90px), radial-gradient(circle at 56% 50%, #8a97a6, transparent 110px), radial-gradient(circle at 79% 110%, #5b6f88, transparent 90px), radial-gradient(circle at 91% 120%, #344457, transparent 70px), #171b22; }
.quick { width: 246px; padding-left: 8px; display: flex; align-items: center; gap: 30px; }
.quick button:first-child { margin-right: -3px; }
.tasks { display: flex; height: 38px; }
.task { width: 159px; padding-left: 9px; gap: 5px; justify-content: flex-start; overflow: hidden; border: 1px solid rgba(255, 255, 255, .45); border-radius: 3px; margin-right: 4px; background: linear-gradient(165deg, rgba(255, 255, 255, .3), rgba(255, 255, 255, .08) 50%, rgba(255, 255, 255, .03)); }
.task.joined { margin-right: 0; }
.task.lit { background: linear-gradient(165deg, rgba(255, 255, 255, .32), rgba(160, 185, 220, .2)); }
.task.active { background: linear-gradient(165deg, rgba(255, 255, 255, .6), rgba(255, 255, 255, .3)); }
.tray { margin-left: auto; height: 100%; display: flex; align-items: center; gap: 8px; }
.lang { margin-right: 8px; }
.clock { display: flex; flex-direction: column; align-items: center; margin: 0 6px 0 10px; line-height: 17px; }
.peek { width: 13px; height: 100%; border: 1px solid rgba(255, 255, 255, .35); background: rgba(255, 255, 255, .12); }
</style>
